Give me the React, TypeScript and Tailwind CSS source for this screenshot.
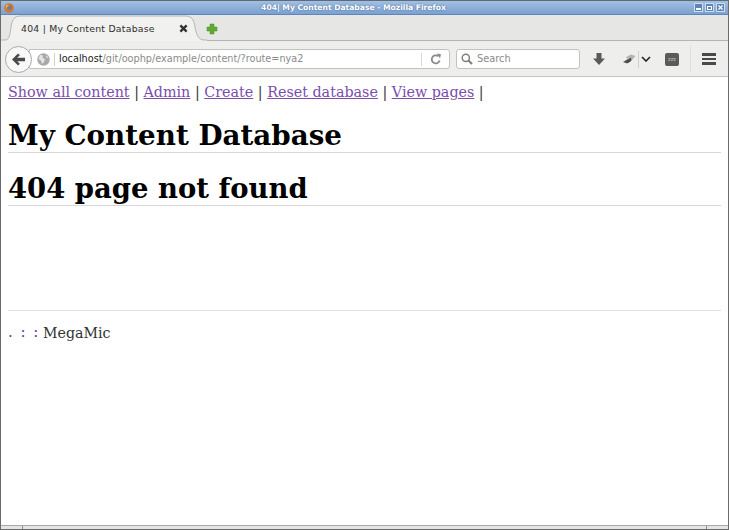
import { X } from 'lucide-react'

const links = ['Show all content', 'Admin', 'Create', 'Reset database', 'View pages']

export default function App() {
  return (
    <div className="w-[729px] h-[530px] flex flex-col overflow-hidden bg-white border-x border-[#6b6b6b] font-['DejaVu_Sans',sans-serif]">
      {/* title bar */}
      <div className="relative h-[15px] shrink-0 flex items-center justify-center pr-[22px] bg-gradient-to-b from-[#a3c0e2] to-[#7ba1d0] border-t border-[#5f6b78] border-b border-b-[#5f86b8]">
        <svg viewBox="0 0 10 10" className="absolute left-[3px] top-[2px] w-[10px] h-[10px]">
          <circle cx="5" cy="5" r="4.8" fill="#d9772b" />
          <circle cx="5.5" cy="4.5" r="2.4" fill="#6a7f9c" />
          <path d="M2 2 Q4 1 5 3 Q3 3 2 6 Z" fill="#efb04a" />
        </svg>
        <span className="text-[7.6px] leading-none font-bold text-white [text-shadow:0_0_2px_#3c5f8c]">404| My Content Database - Mozilla Firefox</span>
        <div className="absolute right-[3px] top-[2px] flex gap-[2px]">
          <div className="w-[9px] h-[9px] bg-[#5d86b8] border border-[#cfdcec] flex items-end justify-center"><div className="w-[5px] h-[2px] mb-[1px] bg-white" /></div>
          <div className="w-[9px] h-[9px] bg-[#5d86b8] border border-[#cfdcec] flex items-center justify-center"><div className="w-[5px] h-[4px] border border-white" /></div>
          <div className="w-[9px] h-[9px] bg-[#5d86b8] border border-[#cfdcec] flex items-center justify-center"><X className="w-[7px] h-[7px] text-white" strokeWidth={4} /></div>
        </div>
      </div>

      {/* tab strip */}
      <div className="relative h-[26px] shrink-0 flex items-end bg-[#e6e6e4]">
        <div className="absolute left-0 right-0 bottom-0 h-px bg-[#b4b4b2]" />
        <svg viewBox="0 0 206 26" className="absolute left-0 top-0 w-[206px] h-[26px]">
          <path d="M0 25 H4 C9 25 9 18 10 12 C11 5 13 1 20 1 H184 C191 1 193 5 194 12 C195 18 197 25 203 25 H206 V26 H0 Z" fill="#f1f1ef" />
          <path d="M0 25 H4 C9 25 9 18 10 12 C11 5 13 1 20 1 H184 C191 1 193 5 194 12 C195 18 197 25 203 25 H206" fill="none" stroke="#b4b4b2" />
        </svg>
        <div className="relative z-10 h-[25px] flex items-center pl-[20px]">
          <span className="w-[158px] text-[9.3px] leading-none text-[#2e2e2e] tracking-[0.25px] whitespace-nowrap">404 | My Content Database</span>
          <svg viewBox="0 0 10 10" className="w-[9px] h-[9px]">
            <path d="M1.5 1.5 L8.5 8.5 M8.5 1.5 L1.5 8.5" stroke="#333333" strokeWidth="2.6" />
          </svg>
          <svg viewBox="0 0 12 12" className="ml-[18px] w-[12px] h-[12px]">
            <path d="M4 1 H8 V4 H11 V8 H8 V11 H4 V8 H1 V4 H4 Z" fill="#62a832" stroke="#4f8f25" strokeWidth="0.5" strokeLinejoin="round" />
          </svg>
        </div>
      </div>

      {/* nav bar */}
      <div className="h-[36px] shrink-0 flex items-center bg-[#eeeeec] border-b border-[#c4c4c2] pl-[4px] pr-[10px] pt-px">
        <div className="relative z-10 w-[27px] h-[27px] shrink-0 rounded-full bg-[#f8f8f8] border border-[#a9a9a7] flex items-center justify-center">
          <svg viewBox="0 0 16 14" className="w-[15px] h-[13px]">
            <path d="M7.5 0.5 L1 7 L7.5 13.5 L9.5 11.5 L6.6 8.8 H15 V5.2 H6.6 L9.5 2.5 Z" fill="#4a4a4a" />
          </svg>
        </div>
        <div className="-ml-[3px] w-[421px] h-[20px] shrink-0 flex items-center bg-white border border-[#c2c2c0] rounded-r-[3px] pl-[7px]">
          <svg viewBox="0 0 13 13" className="w-[13px] h-[13px]">
            <circle cx="6.5" cy="6.5" r="6.2" fill="#a9a9a9" />
            <path d="M3 2 L6 2.5 L5.5 5 L8 6 L7 9 L5 11 L4 7.5 L1.5 6 Z M9 2 L11.5 4.5 L9.5 5 Z" fill="#e4e4e4" />
          </svg>
          <div className="w-px h-[13px] bg-[#d0d0d0] ml-[4px] mr-[4px]" />
          <span className="flex-1 text-[9.7px] leading-none text-[#8a8a8a] whitespace-nowrap"><span className="text-[#222222]">localhost</span>/git/oophp/example/content/?route=nya2</span>
          <div className="w-px h-[13px] bg-[#d8d8d8]" />
          <div className="w-[27px] flex justify-center">
            <svg viewBox="0 0 12 12" className="w-[12px] h-[12px]">
              <path d="M9.6 7.4 A4 4 0 1 1 8.2 3.2" fill="none" stroke="#8a8a8a" strokeWidth="1.8" />
              <path d="M6.8 0.6 L11 1.2 L10 5.6 Z" fill="#8a8a8a" />
            </svg>
          </div>
        </div>
        <div className="ml-[6px] w-[124px] h-[20px] shrink-0 flex items-center bg-white border border-[#c2c2c0] rounded-[3px] pl-[4px]">
          <svg viewBox="0 0 12 12" className="w-[12px] h-[12px]">
            <circle cx="4.8" cy="4.8" r="3.6" fill="none" stroke="#808080" strokeWidth="1.5" />
            <path d="M7.5 7.5 L11 11" stroke="#808080" strokeWidth="2.2" />
          </svg>
          <span className="ml-[4px] text-[9.8px] leading-none text-[#8a8a8a]">Search</span>
        </div>
        <svg viewBox="0 0 14 14" className="ml-[12px] w-[14px] h-[14px]">
          <path d="M4.5 1 H9.5 V6.5 H13 L7 13 L1 6.5 H4.5 Z" fill="#5a5a5a" />
        </svg>
        <svg viewBox="0 0 14 10" className="ml-[16px] w-[14px] h-[10px]">
          <path d="M1 8 L6 5 L9 7 L5 9.5 Z" fill="#555555" />
          <path d="M4 3 L9 0.5 L13.5 2 L10.5 5.5 L6 6 Z" fill="#b5b5b5" />
          <path d="M4 7 L9 3.5 L9.5 6.5 L6 9 Z" fill="#4a4a4a" />
        </svg>
        <div className="w-px h-[17px] bg-[#cfcfcd] ml-[2px]" />
        <svg viewBox="0 0 10 6" className="ml-[2px] w-[10px] h-[6px]">
          <path d="M1 1 L5 5 L9 1" fill="none" stroke="#222222" strokeWidth="1.6" />
        </svg>
        <div className="ml-[14px] w-[14px] h-[13px] rounded-[2px] bg-[#5a5a5a] flex items-center justify-center text-[5px] leading-none text-[#cccccc]">zzz</div>
        <div className="w-px h-[26px] bg-[#e0e0de] ml-[11px]" />
        <div className="ml-[11px] w-[14px] flex flex-col gap-[2px]">
          <div className="h-[2.5px] bg-[#4a4a4a]" />
          <div className="h-[2.5px] bg-[#4a4a4a]" />
          <div className="h-[2.5px] bg-[#4a4a4a]" />
        </div>
      </div>

      {/* page */}
      <div className="flex-1 min-h-0 px-[7px] font-['DejaVu_Serif',serif] text-[#333333]">
        <nav className="pt-[6px] text-[14.3px] leading-[18px] whitespace-nowrap">
          {links.map(l => (
            <span key={l}>
              <a className="underline text-[#7a4eaa]">{l}</a> |{' '}
            </span>
          ))}
        </nav>
        <h1 className="mt-[18px] text-[27.75px] leading-[33px] font-bold text-black border-b border-[#d8d8d8]">My Content Database</h1>
        <h1 className="mt-[19px] text-[27.45px] leading-[33px] font-bold text-black border-b border-[#d8d8d8]">404 page not found</h1>
        <div className="mt-[104px] border-t border-[#e0e0e0] pt-[13px] text-[14.2px] leading-[18px] flex">
          <span className="w-[35px] text-[#5a35b0] whitespace-pre text-[15px] tracking-[1.5px] -mt-[1px]">. : :</span>
          <span>MegaMic</span>
        </div>
      </div>

      {/* status / scrollbar strip */}
      <div className="h-[5px] shrink-0 bg-[#e4e4e2] border-t border-[#a8a8a8] border-b border-b-[#6b6b6b] flex justify-between px-[21px]">
        <div className="w-px bg-[#8a8a8a]" />
        <div className="w-px bg-[#8a8a8a]" />
      </div>
    </div>
  )
}
